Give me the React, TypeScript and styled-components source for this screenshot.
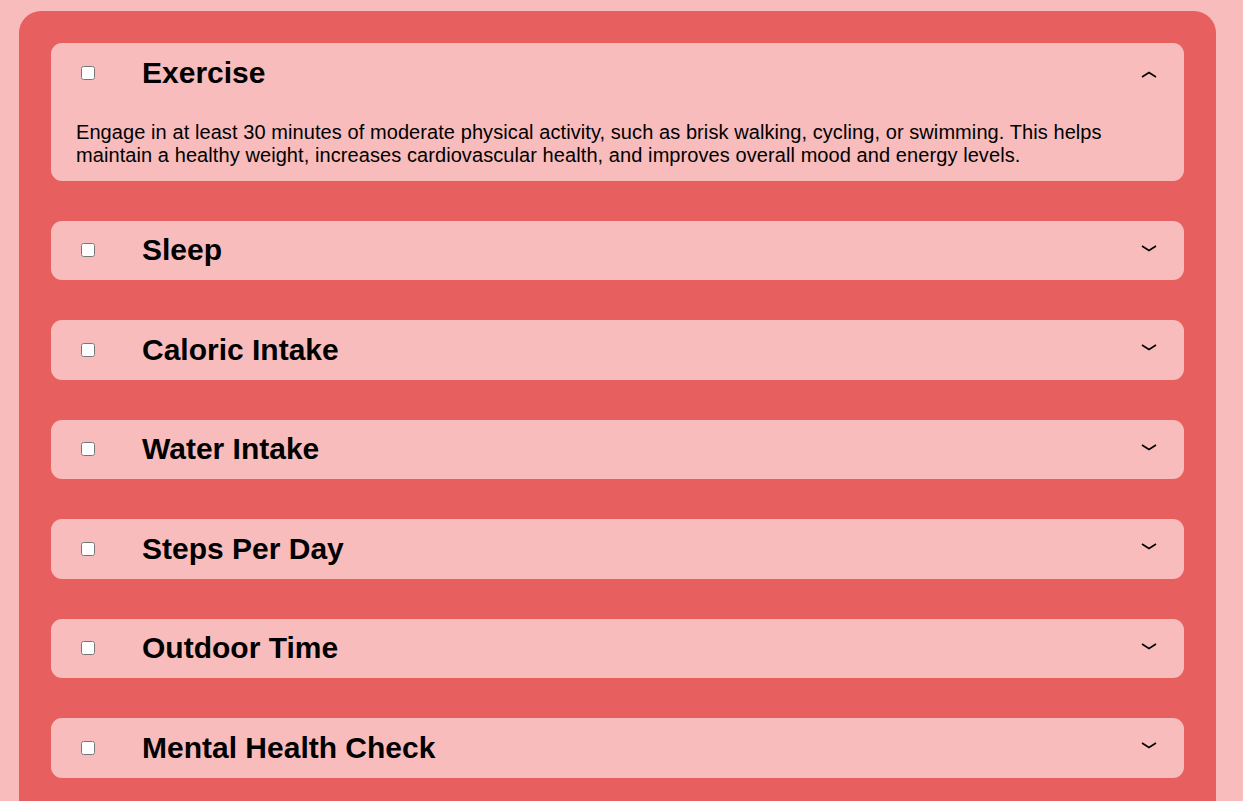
import React, { useState } from "react";
import styled, { createGlobalStyle } from "styled-components";

const Global = createGlobalStyle`
  html, body { margin: 0; padding: 0; background: #f8bcbc; }
  body { font-family: "Liberation Sans", Arial, sans-serif; color: #000; overflow: hidden; }
`;

const Panel = styled.div`
  margin: 11px 0 0 19px;
  width: 1197px;
  box-sizing: border-box;
  padding: 32px;
  background: #e85f5f;
  border-radius: 22px;
  display: flex;
  flex-direction: column;
  gap: 40px;
  min-height: 820px;
`;

const Card = styled.div`
  background: #f8bcbc;
  border-radius: 11px;
  padding: 0 25px;
  box-sizing: border-box;
`;

const Header = styled.div`
  height: 59.5px;
  display: flex;
  align-items: center;
`;

const Check = styled.input`
  margin: 0 0 0 5px;
  width: 14px;
  height: 14px;
`;

const Title = styled.h2`
  margin: 0 0 0 47px;
  font-size: 30px;
  font-weight: bold;
  line-height: 1;
  transform: translateY(-0.5px);
`;

const Chevron = styled.svg<{ $up: boolean }>`
  margin-left: auto;
  margin-right: 2px;
  transform: translateY(${(p) => (p.$up ? "2px" : "-2px")});
`;

const Desc = styled.p`
  margin: 18px 0 0;
  padding-bottom: 14px;
  font-size: 20px;
  letter-spacing: 0.08px;
  line-height: 23px;
`;

const items = [
  {
    title: "Exercise",
    desc: "Engage in at least 30 minutes of moderate physical activity, such as brisk walking, cycling, or swimming. This helps maintain a healthy weight, increases cardiovascular health, and improves overall mood and energy levels.",
  },
  { title: "Sleep", desc: "Aim for 7-9 hours of quality sleep each night." },
  { title: "Caloric Intake", desc: "Track your daily calories." },
  { title: "Water Intake", desc: "Drink at least 8 glasses of water a day." },
  { title: "Steps Per Day", desc: "Walk 10,000 steps per day." },
  { title: "Outdoor Time", desc: "Spend time outdoors every day." },
  { title: "Mental Health Check", desc: "Take a moment to check in with yourself." },
];

function ChevronIcon({ up }: { up: boolean }) {
  return (
    <Chevron $up={up} width="16" height="7" viewBox="0 0 16 7">
      {up ? (
        <polyline points="1,6 8,1.5 15,6" fill="none" stroke="#000" strokeWidth="1.6" />
      ) : (
        <polyline points="1,1 8,5.5 15,1" fill="none" stroke="#000" strokeWidth="1.6" />
      )}
    </Chevron>
  );
}

export default function App() {
  const [open, setOpen] = useState<number>(0);
  return (
    <>
      <Global />
      <Panel>
        {items.map((it, i) => (
          <Card key={it.title}>
            <Header onClick={() => setOpen(open === i ? -1 : i)}>
              <Check type="checkbox" onClick={(e) => e.stopPropagation()} />
              <Title>{it.title}</Title>
              <ChevronIcon up={open === i} />
            </Header>
            {open === i && <Desc>{it.desc}</Desc>}
          </Card>
        ))}
      </Panel>
    </>
  );
}
